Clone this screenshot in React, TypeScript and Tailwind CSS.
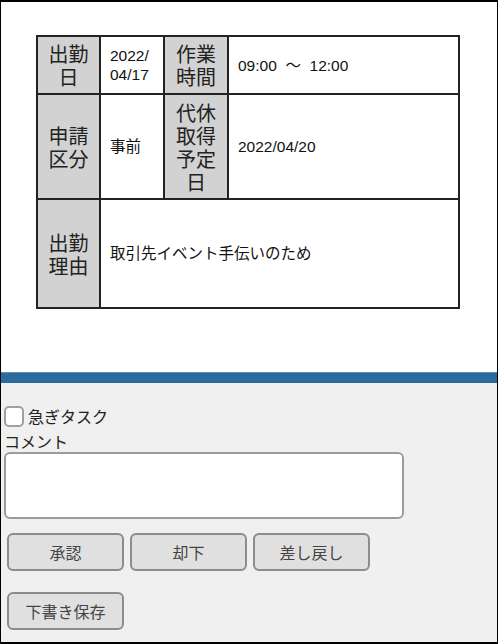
import React from "react";

const font = { fontFamily: "'Liberation Sans', 'Noto Sans CJK JP', sans-serif" };
const jpFont = { fontFamily: "'Noto Sans CJK JP', 'Liberation Sans', sans-serif" };

function HeadCell({ children }: { children: React.ReactNode }) {
  return (
    <td
      className="border-2 border-[#222] bg-[#d2d2d2] text-center align-middle text-[20px] leading-[23px] text-[#222] px-[8px]"
      style={jpFont}
    >
      {children}
    </td>
  );
}

function ValueCell({ children, colSpan }: { children: React.ReactNode; colSpan?: number }) {
  return (
    <td colSpan={colSpan} className="border-2 border-[#222] bg-white align-middle text-[15.5px] leading-[19px] text-[#111] pl-[9px] pr-[4px]">
      {children}
    </td>
  );
}

export default function App() {
  return (
    <div className="w-[498px] h-[644px] border border-t-2 border-b-2 border-black flex flex-col bg-white overflow-hidden" style={font}>
      {/* upper: detail table */}
      <div className="h-[370px] pt-[33px] pl-[35px]">
        <table className="border-collapse table-fixed w-[424px]">
          <colgroup>
            <col className="w-[63px]" />
            <col className="w-[64px]" />
            <col className="w-[64px]" />
            <col />
          </colgroup>
          <tbody>
            <tr className="h-[58px]">
              <HeadCell>出勤日</HeadCell>
              <ValueCell>
                2022/
                <br />
                04/17
              </ValueCell>
              <HeadCell>作業時間</HeadCell>
              <ValueCell>09:00 &nbsp;～&nbsp; 12:00</ValueCell>
            </tr>
            <tr className="h-[105px]">
              <HeadCell>申請区分</HeadCell>
              <ValueCell>事前</ValueCell>
              <HeadCell>代休取得予定日</HeadCell>
              <ValueCell>2022/04/20</ValueCell>
            </tr>
            <tr className="h-[109px]">
              <HeadCell>出勤理由</HeadCell>
              <ValueCell colSpan={3}>取引先イベント手伝いのため</ValueCell>
            </tr>
          </tbody>
        </table>
      </div>

      {/* divider */}
      <div className="h-[11px] bg-[#2c6a9e] border-t border-[#5b8fbb]" />

      {/* lower: form */}
      <div className="flex-1 bg-[#f0f0f0] pl-[3px] pt-[22px]" style={jpFont}>
        <label className="flex items-center gap-[4px] text-[16px] leading-[22px] text-[#222]">
          <span className="w-[20px] h-[21px] rounded-[5px] border-2 border-[#a0a0a0] bg-white" />
          急ぎタスク
        </label>
        <div className="mt-[4px] text-[16px] leading-[20px] text-[#222]">コメント</div>
        <textarea className="mt-[1px] block w-[400px] h-[67px] rounded-[6px] border-2 border-[#9c9c9c] bg-white resize-none" />
        <div className="mt-[14px] flex gap-[6px] pl-[3px]">
          {["承認", "却下", "差し戻し"].map((t) => (
            <button
              key={t}
              className="w-[117px] h-[38px] rounded-[6px] border-2 border-[#8c8c8c] bg-[#e0e0e0] text-[16px] text-[#444]"
            >
              {t}
            </button>
          ))}
        </div>
        <div className="mt-[21px] pl-[3px]">
          <button className="w-[117px] h-[38px] rounded-[6px] border-2 border-[#8c8c8c] bg-[#e0e0e0] text-[16px] text-[#444]">
            下書き保存
          </button>
        </div>
      </div>
    </div>
  );
}
